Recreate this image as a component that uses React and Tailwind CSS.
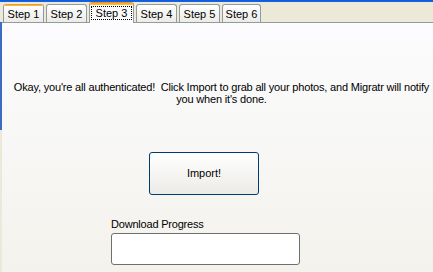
export default function App() {
  const tabs = ["Step 1", "Step 2", "Step 3", "Step 4", "Step 5", "Step 6"];
  return (
    <div
      className="w-[433px] h-[272px] overflow-hidden flex flex-col bg-[#ECE9D8] text-[11px] text-black"
      style={{ fontFamily: '"Liberation Sans", Arial, sans-serif' }}
    >
      <div className="h-[2px] bg-gradient-to-b from-[#0A5BE0] to-[#1A63DD]" />
      <div className="h-[20px] flex items-end pl-[3px] gap-[2px]">
        {tabs.map((t, i) => {
          if (i === 2) {
            return (
              <div
                key={t}
                className="relative z-10 mb-[-1px] h-[21px] w-[45px] flex flex-col border-x border-[#919B9C] bg-[#FCFCFE] rounded-t-[3px] overflow-hidden"
              >
                <div className="h-[3px] bg-gradient-to-b from-[#E68B2C] to-[#FFC73C]" />
                <div className="flex-1 flex justify-center pt-px">
                  <div className="h-[14px] w-[41px] border border-dotted border-black flex items-center justify-center leading-none text-[11px]">
                    {t}
                  </div>
                </div>
              </div>
            );
          }
          const hot = i === 0;
          return (
            <div
              key={t}
              className={`h-[18px] ${i === 5 ? "w-[39px]" : "w-[41px]"} flex flex-col border-x border-t border-[#919B9C] rounded-t-[3px] overflow-hidden bg-gradient-to-b from-[#FFFFFF] to-[#ECEBE6] ${hot ? "border-t-0" : ""}`}
            >
              {hot && <div className="h-[2px] bg-gradient-to-b from-[#E68B2C] to-[#FFC73C]" />}
              <div className={`flex-1 flex items-center justify-center text-[11px] leading-none ${hot ? "" : "pt-px"}`}>
                {t}
              </div>
            </div>
          );
        })}
      </div>
      <div className="flex-1 border-t border-[#919B9C] flex">
        <div className="w-[2px] h-[108px] bg-[#3C6BC0] -mt-px" />
        <div className="flex-1 flex flex-col bg-gradient-to-b from-[#FCFCFE] to-[#F3F2EC]">
          <p className="mt-[58px] pl-[8px] text-center leading-[12px] text-[11px] tracking-[-0.18px] whitespace-nowrap">
            Okay, you're all authenticated!&nbsp; Click Import to grab all your photos, and Migratr will notify
            <br />
            you when it's done.
          </p>
          <button className="mt-[47px] ml-[147px] w-[110px] h-[43px] rounded-[3px] border border-[#003C74] bg-gradient-to-b from-[#FFFFFF] to-[#ECEBE6] text-[11px]">
            Import!
          </button>
          <div className="mt-[22px] ml-[109px] w-[189px] flex flex-col">
            <span className="leading-[14px] tracking-[-0.2px]">Download Progress</span>
            <div className="mt-[2px] h-[32px] rounded-[3px] border border-[#6F6F6F] bg-white" />
          </div>
        </div>
      </div>
    </div>
  );
}
